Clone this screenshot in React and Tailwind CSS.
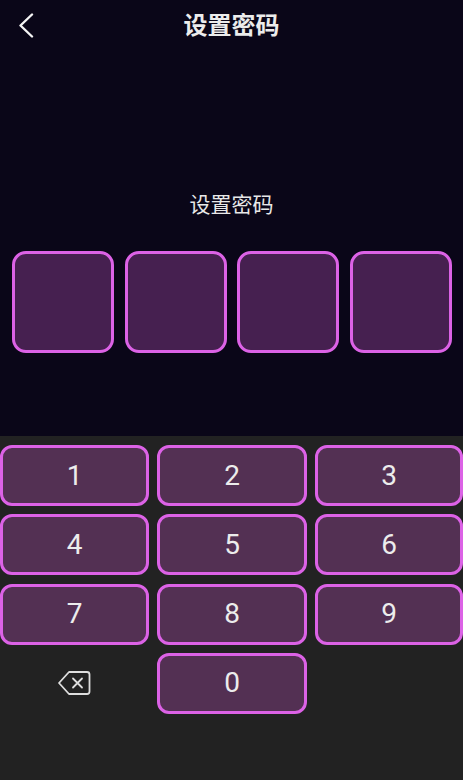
function Key({ children }) {
  return (
    <button className="h-[61px] rounded-[12px] border-[3px] border-[#dc62e6] bg-[#533053] flex items-center justify-center text-[28px] font-normal leading-none text-[#ececec]">
      {children}
    </button>
  );
}

export default function App() {
  return (
    <div className="w-[463px] h-[780px] flex flex-col overflow-hidden bg-[#0a0618] font-['Roboto','Noto_Sans_CJK_SC',sans-serif]">
      <div className="h-[436px] flex flex-col">
        <header className="relative h-[52px] flex items-center justify-center">
          <button className="absolute left-[18px] top-[13px]">
            <svg width="18" height="26" viewBox="0 0 18 26" fill="none" stroke="#f4f4f4" strokeWidth="2.4" strokeLinecap="round" strokeLinejoin="round">
              <path d="M14 1.5 L2.5 12.5 L14 23.5" />
            </svg>
          </button>
          <h1 className="text-[24px] font-bold text-[#ececec]">设置密码</h1>
        </header>
        <p className="mt-[138px] text-center text-[21px] leading-[30px] text-[#e8e8e8]">设置密码</p>
        <div className="mt-[31px] ml-[12px] w-[440px] flex justify-between">
          {[0, 1, 2, 3].map((i) => (
            <div key={i} className="w-[102px] h-[102px] rounded-[14px] border-[3px] border-[#dc62e6] bg-[#462050]" />
          ))}
        </div>
      </div>
      <div className="flex-1 bg-[#222222] pt-[9px] grid grid-cols-[149px_150px_148px] gap-x-[8px] gap-y-[8.33px] content-start">
        {[1, 2, 3, 4, 5, 6, 7, 8, 9].map((n) => (
          <Key key={n}>{n}</Key>
        ))}
        <div className="h-[61px] flex items-center justify-center pr-[2px]">
          <svg width="34" height="26" viewBox="0 0 34 26" fill="none" stroke="#dedede" strokeWidth="1.8" strokeLinecap="round" strokeLinejoin="round">
            <path d="M12 2 H30 Q32.5 2 32.5 4.5 V21.5 Q32.5 24 30 24 H12 L2 13 Z" />
            <path d="M16 8.5 L25 17.5 M25 8.5 L16 17.5" />
          </svg>
        </div>
        <Key>0</Key>
      </div>
    </div>
  );
}
